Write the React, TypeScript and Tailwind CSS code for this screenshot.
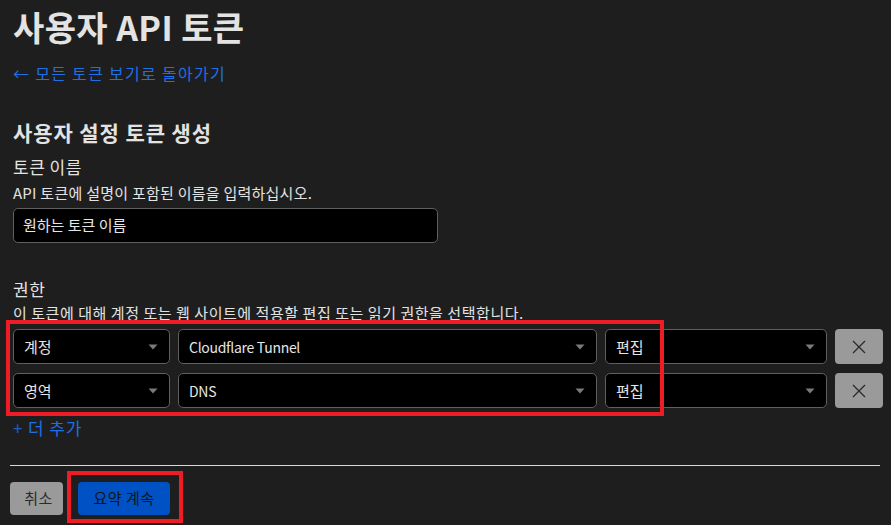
import React from "react";

const font = { fontFamily: '"Noto Sans CJK KR", "Noto Sans", sans-serif' };

function Arrow() {
  return (
    <svg width="10" height="6" viewBox="0 0 10 6" className="shrink-0">
      <path d="M0.5 0.5 H9.5 L5 5.5 Z" fill="#7a7a7a" />
    </svg>
  );
}

function Select({ label, width, latin }: { label: string; width: string; latin?: boolean }) {
  return (
    <div
      className={`${width} h-[35px] shrink-0 rounded-[5px] border border-[#5f5f5f] bg-black flex items-center justify-between pl-[10px] pr-[11px] text-[#e6e6e6]`}
    >
      <span className={latin ? "leading-none text-[14px] tracking-[-0.3px]" : "leading-none text-[15px]"}>{label}</span>
      <Arrow />
    </div>
  );
}

function XButton() {
  return (
    <div className="w-[48px] h-[35px] shrink-0 rounded-[4px] bg-[#9a9a9a] flex items-center justify-center">
      <svg width="16" height="16" viewBox="0 0 16 16">
        <path d="M2 2 L14 14 M14 2 L2 14" stroke="#2a2a2a" strokeWidth="1.3" />
      </svg>
    </div>
  );
}

function Row({ a, b }: { a: string; b: string }) {
  return (
    <div className="flex gap-[8px]">
      <Select label={a} width="w-[157px]" />
      <Select label={b} width="w-[419px]" latin />
      <Select label="편집" width="w-[222px]" />
      <XButton />
    </div>
  );
}

export default function App() {
  return (
    <div className="min-h-screen w-full bg-[#1e1e1e] pl-[10px] pr-[11px] overflow-hidden" style={font}>
      <div className="ml-[3px]">
        <h1 className="text-[34px] font-bold leading-[54px] text-[#e3e3e3] tracking-[0.4px]">사용자 API 토큰</h1>
        <div className="leading-[38px] text-[16px] tracking-[1.3px] text-[#1f6fe6]">← 모든 토큰 보기로 돌아가기</div>
        <h2 className="mt-[26px] text-[21px] font-bold leading-[28px] tracking-[0.9px] text-[#e3e3e3]">사용자 설정 토큰 생성</h2>
        <div className="mt-[9px] text-[17px] leading-[24px] tracking-[0.5px] text-[#e3e3e3]">토큰 이름</div>
        <div className="mt-[3px] text-[15px] leading-[22px] tracking-[0.25px] text-[#e3e3e3]">API 토큰에 설명이 포함된 이름을 입력하십시오.</div>
        <div className="mt-[4px] w-[425px] h-[35px] rounded-[5px] border border-[#5f5f5f] bg-black flex items-center pl-[9px] text-[15px] text-[#e6e6e6]">
          원하는 토큰 이름
        </div>
        <div className="mt-[34px] text-[17px] leading-[24px] tracking-[0.5px] text-[#e3e3e3]">권한</div>
        <div className="mt-[1px] text-[15px] leading-[22px] tracking-[0.55px] text-[#e3e3e3] whitespace-nowrap">
          이 토큰에 대해 계정 또는 웹 사이트에 적용할 편집 또는 읽기 권한을 선택합니다.
        </div>
        <div className="relative mt-[5px] flex flex-col gap-[9px]">
          <Row a="계정" b="Cloudflare Tunnel" />
          <Row a="영역" b="DNS" />
          <div className="absolute left-[-7px] top-[-9px] w-[658px] h-[96px] border-[4px] border-[#ee1c25] pointer-events-none" />
        </div>
        <div className="mt-[8px] text-[17px] leading-[24px] tracking-[0.9px] text-[#1f6fe6]">
          <span className="text-[#1a5fc8]">+</span> 더 추가
        </div>
      </div>
      <div className="mt-[25px] h-[1px] bg-[#d8d8d8]" />
      <div className="mt-[16px] flex gap-[15px]">
        <div className="w-[53px] h-[33px] rounded-[4px] bg-[#9a9a9a] flex items-center justify-center pl-[4px] text-[15px] tracking-[0.5px] text-[#2a2a2a]">
          취소
        </div>
        <div className="relative">
          <div className="w-[92px] h-[33px] rounded-[4px] bg-[#0051c3] flex items-center justify-center text-[15px] tracking-[0.5px] text-[#141414]">
            요약 계속
          </div>
          <div className="absolute left-[-11px] top-[-11px] w-[116px] h-[52px] border-[4px] border-[#ee1c25] pointer-events-none" />
        </div>
      </div>
    </div>
  );
}
